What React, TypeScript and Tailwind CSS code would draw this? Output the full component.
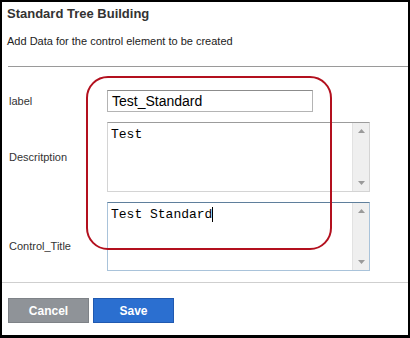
import React from "react";

function ScrollBar() {
  return (
    <div className="w-[17px] h-full bg-[#efefef] border-l border-[#e2e2e2] flex flex-col justify-between items-center py-[6px]">
      <svg width="7" height="4" viewBox="0 0 7 4"><path d="M0 4 L3.5 0 L7 4 Z" fill="#9a9a9a" /></svg>
      <svg width="7" height="4" viewBox="0 0 7 4"><path d="M0 0 L3.5 4 L7 0 Z" fill="#9a9a9a" /></svg>
    </div>
  );
}

export default function App() {
  return (
    <div className="relative w-[410px] h-[338px] box-border bg-white border-black border-t-2 border-l-2 border-r-2 border-b-[3px] font-['Liberation_Sans',Arial,sans-serif] text-[#333]">
      <div className="pl-[5px] pt-[4px] text-[13px] leading-[16px] font-bold text-[#333]">Standard Tree Building</div>
      <div className="pl-[5px] mt-[13px] text-[11px] leading-[13px] text-[#222]">Add Data for the control element to be created</div>
      <div className="ml-[6px] mt-[18px] border-t border-[#9a9a9a]" />

      <div className="mt-[23px] flex items-center h-[22px]">
        <div className="w-[105px] pl-[7px] text-[11px] leading-[13px]">label</div>
        <div className="w-[206px] h-[22px] box-border border border-[#b4b4b4] border-t-[#8c8c8c] px-[4px] flex items-center text-[14px] text-black">Test_Standard</div>
      </div>

      <div className="mt-[10px] flex items-center h-[70px]">
        <div className="w-[105px] pl-[7px] text-[11px] leading-[13px]">Descritption</div>
        <div className="w-[263px] h-[70px] box-border border border-[#d4d4d4] border-t-[#9c9c9c] flex">
          <div className="flex-1 px-[3px] pt-[4px] font-['Liberation_Mono',monospace] text-[13px] leading-[15px] text-black">Test</div>
          <ScrollBar />
        </div>
      </div>

      <div className="mt-[10px] flex items-start h-[69px]">
        <div className="w-[105px] pl-[7px] mt-[38px] text-[11px] leading-[13px]">Control_Title</div>
        <div className="w-[263px] h-[69px] box-border border border-[#a9c3da] border-t-[#5f7f9c] flex">
          <div className="flex-1 px-[3px] pt-[4px] font-['Liberation_Mono',monospace] text-[13px] leading-[15px] text-black flex items-start">
            <span>Test Standard</span>
            <span className="inline-block w-px h-[15px] bg-black" />
          </div>
          <ScrollBar />
        </div>
      </div>

      <div className="mt-[11px] border-t border-[#cfcfcf]" />

      <div className="mt-[15px] pl-[6px] flex gap-[4px]">
        <div className="w-[81px] h-[25px] box-border bg-[#8f9398] border border-[#7e8287] flex items-center justify-center text-white font-bold text-[12px]">Cancel</div>
        <div className="w-[81px] h-[25px] box-border bg-[#2b6fd0] border border-[#2059b0] flex items-center justify-center text-white font-bold text-[12px]">Save</div>
      </div>

      <div className="absolute left-[84px] top-[74px] w-[246px] h-[174px] border-2 border-[#b3101e] rounded-[22px] pointer-events-none" />
    </div>
  );
}
